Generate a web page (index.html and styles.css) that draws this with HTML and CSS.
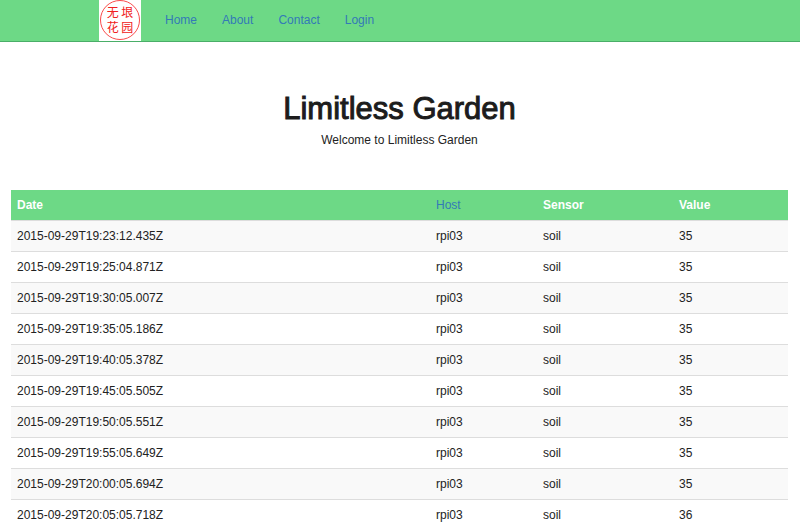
FILE: index.html
```html
<!DOCTYPE html>
<html lang="en">
<head>
<meta charset="utf-8">
<meta name="viewport" content="width=device-width, initial-scale=1">
<title>Limitless Garden</title>
<link rel="stylesheet" href="styles.css">
</head>
<body>
<header class="navbar">
  <a class="brand" href="#" aria-label="无垠花园">
    <svg class="seal" viewBox="0 0 42 41" aria-hidden="true">
      <circle cx="21" cy="20" r="19.5" fill="none" stroke="#fa4a4a" stroke-width="1"/>
      <text x="21" y="17" class="seal-char">无 垠</text>
      <text x="21" y="32" class="seal-char">花 园</text>
    </svg>
  </a>
  <nav class="links">
    <a href="#">Home</a>
    <a href="#">About</a>
    <a href="#">Contact</a>
    <a href="#">Login</a>
  </nav>
</header>
<main class="content">
  <div class="intro">
    <h1>Limitless Garden</h1>
    <p>Welcome to Limitless Garden</p>
  </div>
  <table class="readings">
    <colgroup><col><col class="col-host"><col class="col-sensor"><col class="col-value"></colgroup>
    <thead>
      <tr><th scope="col">Date</th><th scope="col"><a href="#">Host</a></th><th scope="col">Sensor</th><th scope="col">Value</th></tr>
    </thead>
    <tbody>
      <tr><td>2015-09-29T19:23:12.435Z</td><td>rpi03</td><td>soil</td><td>35</td></tr>
      <tr><td>2015-09-29T19:25:04.871Z</td><td>rpi03</td><td>soil</td><td>35</td></tr>
      <tr><td>2015-09-29T19:30:05.007Z</td><td>rpi03</td><td>soil</td><td>35</td></tr>
      <tr><td>2015-09-29T19:35:05.186Z</td><td>rpi03</td><td>soil</td><td>35</td></tr>
      <tr><td>2015-09-29T19:40:05.378Z</td><td>rpi03</td><td>soil</td><td>35</td></tr>
      <tr><td>2015-09-29T19:45:05.505Z</td><td>rpi03</td><td>soil</td><td>35</td></tr>
      <tr><td>2015-09-29T19:50:05.551Z</td><td>rpi03</td><td>soil</td><td>35</td></tr>
      <tr><td>2015-09-29T19:55:05.649Z</td><td>rpi03</td><td>soil</td><td>35</td></tr>
      <tr><td>2015-09-29T20:00:05.694Z</td><td>rpi03</td><td>soil</td><td>35</td></tr>
      <tr><td>2015-09-29T20:05:05.718Z</td><td>rpi03</td><td>soil</td><td>36</td></tr>
    </tbody>
  </table>
</main>
</body>
</html>
```

FILE: styles.css
```css
* {
  box-sizing: border-box;
}

body {
  margin: 0;
  background: #fff;
  color: #222;
  font-family: "Liberation Sans", Arial, "Noto Sans CJK SC", sans-serif;
  font-size: 12px;
  line-height: 18px;
}

a {
  color: #337ab7;
  text-decoration: none;
}

.navbar {
  display: flex;
  align-items: flex-start;
  padding: 0 99px;
  background: #6dd986;
  border-bottom: 1px solid #4aae68;
}

.brand {
  flex: none;
  width: 42px;
  background: #fff;
}

.seal {
  display: block;
  width: 100%;
}

.seal-char {
  fill: #f02020;
  font-family: "Noto Sans CJK SC", sans-serif;
  font-size: 12px;
  text-anchor: middle;
}

.links {
  display: flex;
  gap: 25px;
  padding: 11px 24px;
}

.content {
  padding: 49px 12px 0 11px;
}

.intro {
  padding-bottom: 41px;
  text-align: center;
}

h1 {
  margin: 0 0 4px;
  color: #1c1c1c;
  font-size: 31px;
  font-weight: 400;
  line-height: 36px;
  -webkit-text-stroke: 1px #1c1c1c;
}

.intro p {
  margin: 0;
}

.readings {
  width: 100%;
  table-layout: fixed;
  border-collapse: separate;
  border-spacing: 0;
}

.col-host {
  width: 107px;
}

.col-sensor {
  width: 136px;
}

.col-value {
  width: 115px;
}

.readings th,
.readings td {
  padding: 6px;
  text-align: left;
  vertical-align: top;
}

.readings th {
  background: #6dd986;
  color: #fff;
  font-weight: 700;
}

.readings th a {
  font-weight: 400;
}

.readings td {
  border-top: 1px solid #ddd;
}

.readings tbody tr:nth-child(odd) {
  background: #f9f9f9;
}
```
